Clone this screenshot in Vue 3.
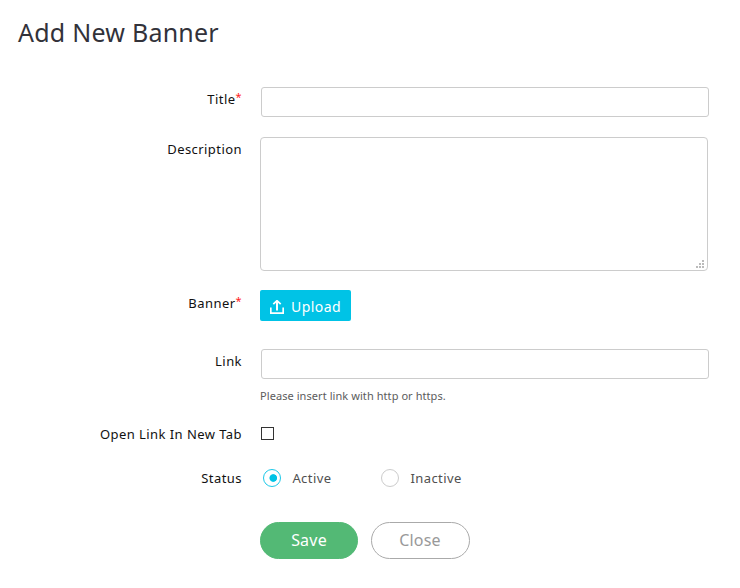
<script setup>
import { ref } from 'vue'

const title = ref('')
const description = ref('')
const link = ref('')
const newTab = ref(false)
const status = ref('Active')
const options = ['Active', 'Inactive']
</script>

<template>
  <main class="page">
    <h1 class="heading">Add New Banner</h1>
    <form class="form" @submit.prevent>
      <div class="row row-title">
        <label class="label" for="title">Title<span class="required">*</span></label>
        <input id="title" v-model="title" class="input" type="text" />
      </div>
      <div class="row row-description">
        <label class="label" for="description">Description</label>
        <div class="area">
          <textarea id="description" v-model="description" class="textarea"></textarea>
          <svg class="grip" width="8" height="8" viewBox="0 0 8 8" shape-rendering="crispEdges">
            <path d="M6 0h2v2h-2zM3 3h2v2h-2zM6 3h2v2h-2zM0 6h2v2h-2zM3 6h2v2h-2zM6 6h2v2h-2z" />
          </svg>
        </div>
      </div>
      <div class="row row-banner">
        <span class="label">Banner<span class="required">*</span></span>
        <button class="upload" type="button">
          <svg width="14" height="14" viewBox="0 0 14 14" fill="none" stroke="#fff">
            <path d="M0.8 7.5v5.6h12.4V7.5" stroke-width="1.7" />
            <path d="M7 10.5V1" stroke-width="2" />
            <path d="M3.3 4.2L7 0.7l3.7 3.5" stroke-width="1.8" />
          </svg>
          <span class="upload-text">Upload</span>
        </button>
      </div>
      <div class="row row-link">
        <label class="label" for="link">Link</label>
        <div class="field">
          <input id="link" v-model="link" class="input" type="text" />
          <p class="help">Please insert link with http or https.</p>
        </div>
      </div>
      <div class="row row-tab">
        <label class="label" for="tab">Open Link In New Tab</label>
        <input id="tab" v-model="newTab" class="checkbox" type="checkbox" />
      </div>
      <div class="row row-status">
        <span class="label">Status</span>
        <div class="radios">
          <label v-for="o in options" :key="o" class="radio">
            <input v-model="status" class="dot" type="radio" name="status" :value="o" />
            <span class="radio-text">{{ o }}</span>
          </label>
        </div>
      </div>
      <div class="actions">
        <button class="btn save" type="submit">Save</button>
        <button class="btn close" type="button">Close</button>
      </div>
    </form>
  </main>
</template>

<style>
body {
  background: #fff;
}
</style>

<style scoped>
.page {
  box-sizing: border-box;
  width: 740px;
  height: 588px;
  overflow: hidden;
  padding: 15px 31px 0 18px;
  font-family: "Noto Sans", sans-serif;
  font-size: 13px;
  color: #111;
}
.heading {
  margin: 0 0 37px;
  height: 35px;
  font-size: 25px;
  line-height: 35px;
  font-weight: 400;
  letter-spacing: 0.24px;
  color: #32323a;
}
.row {
  display: grid;
  grid-template-columns: 224px 449px;
  column-gap: 18px;
  align-items: start;
}
.row-title { height: 50px; }
.row-description { height: 153px; }
.row-banner { height: 59px; }
.row-link { height: 78px; }
.row-tab { height: 42px; }
.row-status { height: 53px; }
.label {
  display: block;
  height: 18px;
  margin-top: 3px;
  line-height: 18px;
  text-align: right;
  letter-spacing: 0.44px;
  white-space: nowrap;
}
.row-banner .label { margin-top: 4px; }
.row-tab .label { margin-top: -2px; }
.row-status .label { margin-top: 0; }
.required {
  position: relative;
  top: -3px;
  font-size: 11px;
  line-height: 1;
  color: #f22;
}
.input {
  display: block;
  box-sizing: border-box;
  width: 448px;
  height: 30px;
  margin: 0 0 0 1px;
  padding: 4px 8px;
  border: 1px solid #ccc;
  border-radius: 3px;
  outline: none;
  font: inherit;
}
.area {
  position: relative;
  width: 448px;
  height: 134px;
}
.textarea {
  display: block;
  box-sizing: border-box;
  width: 100%;
  height: 100%;
  margin: 0;
  padding: 6px 8px;
  border: 1px solid #ccc;
  border-radius: 4px;
  outline: none;
  resize: none;
  font: inherit;
}
.grip {
  position: absolute;
  right: 4px;
  bottom: 3px;
  fill: #bbb;
}
.upload {
  display: flex;
  align-items: center;
  box-sizing: border-box;
  width: 91px;
  height: 31px;
  gap: 7px;
  padding: 3px 0 0 10px;
  border: 0;
  border-radius: 2px;
  background: #00c3e6;
  color: #fff;
  font: 14px/20px "Noto Sans", sans-serif;
  letter-spacing: 0.45px;
}
.help {
  margin: 9px 0 0;
  font-size: 11px;
  line-height: 16px;
  letter-spacing: 0.07px;
  color: #5c5c5c;
}
.checkbox {
  appearance: none;
  box-sizing: border-box;
  width: 13px;
  height: 13px;
  margin: 0 0 0 1px;
  border: 1px solid #333;
  background: #fff;
}
.checkbox:checked { background: #00c3e6; }
.radios { display: flex; padding-left: 3px; }
.radio {
  display: flex;
  width: 118px;
  height: 18px;
  gap: 11.4px;
}
.radio-text {
  line-height: 18px;
  letter-spacing: 0.42px;
  color: #505050;
}
.dot {
  appearance: none;
  box-sizing: border-box;
  width: 18px;
  height: 18px;
  margin: 0;
  border: 1px solid #ccc;
  border-radius: 50%;
}
.dot:checked {
  border-color: #1cc8e8;
  background: radial-gradient(circle at 58% 50%, #00c3e6 3.4px, transparent 4.2px);
}
.actions {
  display: flex;
  gap: 13px;
  padding-left: 242px;
}
.btn {
  box-sizing: border-box;
  height: 37px;
  padding: 0;
  border-radius: 19px;
  font: 16px/35px "Noto Sans", sans-serif;
  letter-spacing: 0.2px;
  text-align: center;
}
.save {
  width: 98px;
  border: 1px solid #53b975;
  background: #53b975;
  color: #fff;
}
.close {
  width: 99px;
  padding-right: 1px;
  border: 1px solid #aaa;
  background: #fff;
  color: #999;
}
</style>
